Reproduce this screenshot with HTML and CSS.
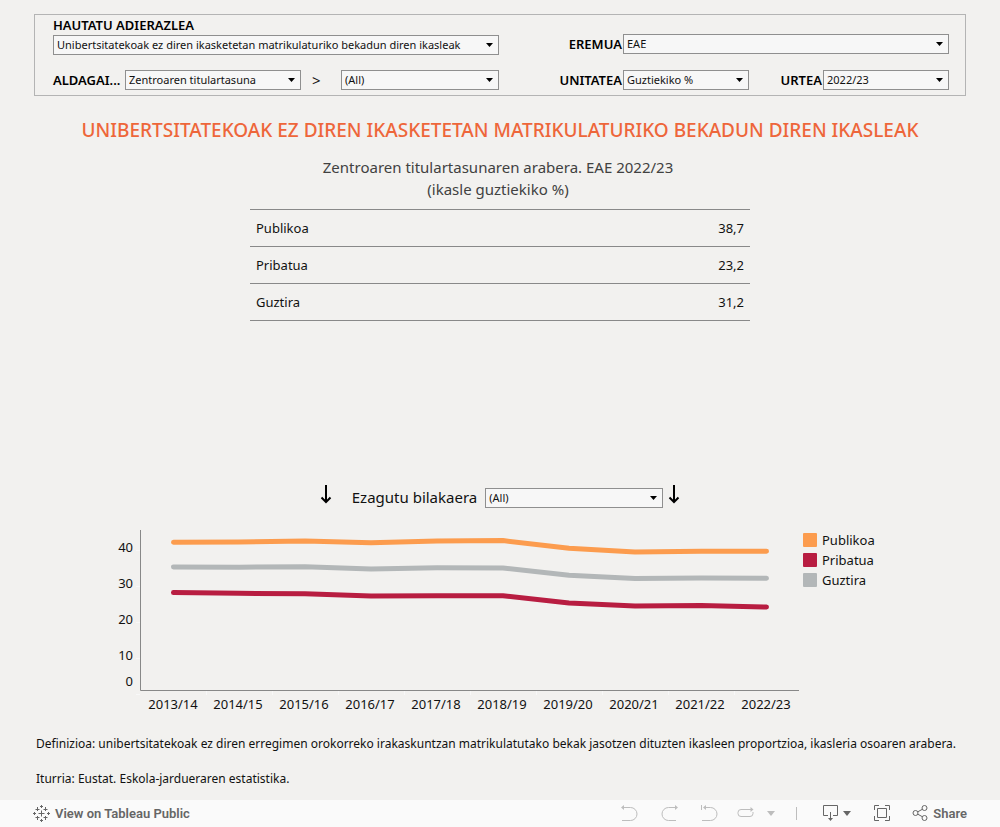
FILE: index.html
```html
<!DOCTYPE html>
<html lang="eu">
<head>
<meta charset="utf-8">
<meta name="viewport" content="width=device-width, initial-scale=1">
<title>Unibertsitatekoak ez diren ikasketetan matrikulaturiko bekadun diren ikasleak</title>
<link rel="stylesheet" href="styles.css">
</head>
<body>
<main class="dashboard">
  <form class="filters">
    <div class="filters-left">
      <label class="filter-label" for="indicator">HAUTATU ADIERAZLEA</label>
      <select class="dropdown" id="indicator"><option>Unibertsitatekoak ez diren ikasketetan matrikulaturiko bekadun diren ikasleak</option></select>
      <div class="variable-row">
        <label class="filter-label" for="variable">ALDAGAI...</label>
        <select class="dropdown" id="variable"><option>Zentroaren titulartasuna</option></select>
        <label class="chevron" for="category">&gt;</label>
        <select class="dropdown" id="category"><option>(All)</option></select>
      </div>
    </div>
    <div class="filters-right">
      <label class="filter-label" for="area">EREMUA</label>
      <select class="dropdown dropdown-wide" id="area"><option>EAE</option></select>
      <label class="filter-label" for="unit">UNITATEA</label>
      <select class="dropdown" id="unit"><option>Guztiekiko %</option></select>
      <label class="filter-label" for="year">URTEA</label>
      <select class="dropdown" id="year"><option>2022/23</option></select>
    </div>
  </form>

  <h1 class="title">UNIBERTSITATEKOAK EZ DIREN IKASKETETAN MATRIKULATURIKO BEKADUN DIREN IKASLEAK</h1>
  <p class="subtitle">Zentroaren titulartasunaren arabera. EAE 2022/23<br>(ikasle guztiekiko %)</p>

  <div class="table-area">
    <table class="results">
      <tbody>
        <tr><th scope="row">Publikoa</th><td>38,7</td></tr>
        <tr><th scope="row">Pribatua</th><td>23,2</td></tr>
        <tr><th scope="row">Guztira</th><td>31,2</td></tr>
      </tbody>
    </table>
  </div>

  <div class="evolution">
    <svg class="arrow" viewBox="0 0 12 20" aria-hidden="true"><path d="M6 1v17M1.500 13.500L6 18l4.500-4.500"/></svg>
    <label class="evolution-label" for="evolution">Ezagutu bilakaera</label>
    <select class="dropdown evolution-select" id="evolution"><option>(All)</option></select>
    <svg class="arrow" viewBox="0 0 12 20" aria-hidden="true"><path d="M6 1v17M1.500 13.500L6 18l4.500-4.500"/></svg>
  </div>

  <section class="chart-row">
    <svg class="chart" viewBox="0 0 700 186" role="img" aria-label="Bilakaera 2013/14 - 2022/23">
      <path class="tick" d="M36 20.500h4M36 56.500h4M36 92.500h4M36 128.500h4M36 164.500h4M106.500 161v4M172.500 161v4M238.500 161v4M304.500 161v4M370.500 161v4M436.500 161v4M502.500 161v4M568.500 161v4M634.500 161v4"/>
      <path class="axis" d="M40.500 0v160.500H699"/>
      <g class="y-labels">
        <text x="33" y="22">40</text><text x="33" y="58">30</text><text x="33" y="94">20</text><text x="33" y="130">10</text><text x="33" y="156">0</text>
      </g>
      <g class="x-labels">
        <text x="73" y="179">2013/14</text><text x="138" y="179">2014/15</text><text x="204" y="179">2015/16</text><text x="270" y="179">2016/17</text><text x="336" y="179">2017/18</text><text x="402" y="179">2018/19</text><text x="468" y="179">2019/20</text><text x="534" y="179">2020/21</text><text x="600" y="179">2021/22</text><text x="666" y="179">2022/23</text>
      </g>
      <polyline class="line line-public" points="73.500,12.300 139,11.900 205,10.900 271,12.700 337,11.100 403,10.600 469,18.200 535,22 601,21.300 666.500,21.200"/>
      <polyline class="line line-total" points="73.500,37.100 139,37.200 205,36.700 271,38.900 337,37.800 403,37.900 469,45.300 535,48.600 601,47.900 666.500,48.200"/>
      <polyline class="line line-private" points="73.500,62.600 139,63.300 205,63.800 271,66 337,65.700 403,65.700 469,73 535,75.900 601,75.400 666.500,77"/>
    </svg>
    <ul class="legend">
      <li><span class="swatch swatch-public"></span>Publikoa</li>
      <li><span class="swatch swatch-private"></span>Pribatua</li>
      <li><span class="swatch swatch-total"></span>Guztira</li>
    </ul>
  </section>

  <p class="note">Definizioa: unibertsitatekoak ez diren erregimen orokorreko irakaskuntzan matrikulatutako bekak jasotzen dituzten ikasleen proportzioa, ikasleria osoaren arabera.</p>
  <p class="note">Iturria: Eustat. Eskola-jardueraren estatistika.</p>
</main>

<footer class="toolbar">
  <a class="tool tableau" href="#">
    <svg width="17" height="17" viewBox="0 0 17 17" aria-hidden="true"><path d="M8.500 5.500v6M5.500 8.500h6M8.500 0v3M7 1.500h3M8.500 14v3M7 15.500h3M0 8.500h3M1.500 7v3M14 8.500h3M15.500 7v3M4.500 2v4M2.500 4.500h4M12.500 2v4M10.500 4.500h4M4.500 11v4M2.500 12.500h4M12.500 11v4M10.500 12.500h4"/></svg>
    View on Tableau Public
  </a>
  <div class="tools">
    <button class="tool muted" type="button" aria-label="Undo"><svg width="17" height="17" viewBox="0 0 17 17"><path d="M1 2.500h8.500a6.500 6.500 0 0 1 0 13H1"/><path class="solid" d="M0 2.500L3 0v5z"/></svg></button>
    <button class="tool muted" type="button" aria-label="Redo"><svg width="17" height="17" viewBox="0 0 17 17"><path d="M16 2.500H7.500a6.500 6.500 0 0 0 0 13H15"/><path class="solid" d="M17 2.500L14 0v5z"/></svg></button>
    <button class="tool muted revert" type="button" aria-label="Revert"><svg width="17" height="17" viewBox="0 0 17 17"><path d="M.5 0v5M3 2.500h6.500a6.500 6.500 0 0 1 0 13H1"/><path class="solid" d="M2 2.500L5 0v5z"/></svg></button>
    <button class="tool muted menu" type="button" aria-label="Refresh"><svg width="17" height="17" viewBox="0 0 17 17"><path d="M14 4.500H4a3 3 0 0 0-3 3v1a3 3 0 0 0 3 3h9a3 3 0 0 0 3-3V7"/><path class="solid" d="M16.500 4.500l-3-2.500v5z"/></svg><svg class="caret" width="8" height="5" viewBox="0 0 8 5"><path class="solid" d="M0 0h8L4 5z"/></svg></button>
    <span class="divider"></span>
    <button class="tool download" type="button" aria-label="Download"><svg width="17" height="17" viewBox="0 0 17 17"><path d="M5 10.500H.5v-10h14v10H10M7.500 7v7"/><path class="solid" d="M5 13h5l-2.500 3z"/></svg><svg class="caret" width="8" height="5" viewBox="0 0 8 5"><path class="solid" d="M0 0h8L4 5z"/></svg></button>
    <button class="tool fullscreen" type="button" aria-label="Full screen"><svg width="17" height="17" viewBox="0 0 17 17"><path d="M.5 5V.5H5M11 .5h4.500V5M15.500 11v4.500H11M5 15.500H.5V11M3.500 3.500h9v9h-9z"/></svg></button>
    <button class="tool share" type="button"><svg width="17" height="17" viewBox="0 0 17 17" aria-hidden="true"><circle cx="3.500" cy="8" r="2.500"/><circle cx="12.500" cy="3" r="2.500"/><circle cx="12.500" cy="13" r="2.500"/><path d="M5.800 6.800l4.500-2.500M5.800 9.200l4.500 2.500"/></svg>Share</button>
  </div>
</footer>
</body>
</html>
```
FILE: styles.css
```css
* { box-sizing: border-box; }

body {
  margin: 0;
  min-height: 100vh;
  display: flex;
  flex-direction: column;
  background: #f2f1ef;
  color: #111;
  font-family: "Noto Sans", "Open Sans", sans-serif;
  font-size: 13px;
}

.dashboard {
  flex: 1;
  padding: 14px 34px 0;
}

/* Filter panel */
.filters {
  display: flex;
  gap: 62px;
  height: 82px;
  padding: 0 16px 0 18px;
  border: 1px solid #b4b4b4;
}

.filters-left { flex: 446 1 0; min-width: 0; padding-top: 1px; }
.filters-left > .filter-label { display: block; margin-bottom: 1px; line-height: 18px; }
.variable-row {
  display: grid;
  grid-template-columns: 72px 176fr 40px 158fr;
  align-items: center;
  margin-top: 15px;
}

.filters-right {
  flex: 388 1 0;
  min-width: 0;
  display: grid;
  grid-template-columns: 62px 1fr 74px 1fr;
  grid-auto-rows: 20px;
  row-gap: 16px;
  align-items: center;
  padding-top: 19px;
}
.filters-right .filter-label { justify-self: end; padding-right: 1px; }

.filter-label {
  font-size: 13px;
  font-weight: 600;
  color: #000;
  line-height: 20px;
  white-space: nowrap;
}

.chevron { padding-left: 11px; font-size: 15px; line-height: 20px; }

.dropdown {
  display: block;
  width: 100%;
  min-width: 0;
  height: 20px;
  padding: 0 18px 0 3px;
  border: 1px solid #8f8f8f;
  border-radius: 0;
  appearance: none;
  background: #f7f7f7 url("data:image/svg+xml,%3Csvg xmlns='http://www.w3.org/2000/svg' width='7' height='4'%3E%3Cpath d='M0 0h7L3.500 4z'/%3E%3C/svg%3E") no-repeat right 5px center;
  color: #111;
  font-family: inherit;
  font-size: 11px;
  line-height: 18px;
}
.dropdown-wide { grid-column: 2 / -1; }

/* Headings */
.title {
  margin: 20px 0 0;
  color: #ee663a;
  font-size: 19px;
  font-weight: 500;
  line-height: 28px;
  text-align: center;
}

.subtitle {
  margin: 12px 4px 0 0;
  color: #414141;
  font-size: 15px;
  line-height: 22px;
  text-align: center;
}

/* Results table */
.table-area { min-height: 284px; padding-top: 9px; }
.results {
  width: 500px;
  max-width: 100%;
  margin: 0 auto;
  border-collapse: collapse;
}
.results tr { height: 37px; border: solid #898989; border-width: 1px 0; }
.results th { padding: 0 6px; font-weight: 400; text-align: left; }
.results td { padding: 0 6px; text-align: right; }

/* Evolution selector */
.evolution {
  display: flex;
  justify-content: center;
  height: 24px;
}
.arrow { width: 12px; height: 20px; fill: none; stroke: #000; stroke-width: 2; }
.evolution-label { margin: 2px 8px 0 20px; font-size: 15px; line-height: 22px; }
.evolution-select { width: 178px; margin: 4px 5px 0 0; }

/* Line chart */
.chart-row {
  display: flex;
  align-items: flex-start;
  gap: 3px;
  margin-top: 22px;
  padding: 0 56px 0 66px;
}
.chart { flex: 1; min-width: 0; overflow: visible; font-size: 13px; fill: #111; }
.axis { fill: none; stroke: #888; }
.tick { fill: none; stroke: #f8f8f8; }
.y-labels { text-anchor: end; }
.x-labels { text-anchor: middle; }
.line { fill: none; stroke-width: 5; stroke-linecap: round; stroke-linejoin: round; }
.line-public { stroke: #fc9c4e; }
.line-total { stroke: #b3b7b8; }
.line-private { stroke: #b81d41; }

.legend { width: 107px; margin: 0; padding: 0; list-style: none; }
.legend li { display: flex; align-items: center; gap: 5px; height: 20px; line-height: 20px; }
.swatch { width: 14px; height: 14px; border-radius: 1px; }
.swatch-public { background: #fc9c4e; }
.swatch-total { background: #b3b7b8; }
.swatch-private { background: #b81d41; }

/* Notes */
.note { margin: 0 0 17px 2px; font-size: 12px; line-height: 18px; }
.chart-row + .note { margin-top: 19px; }
.note:last-child { margin-bottom: 0; }

/* Toolbar */
.toolbar {
  display: flex;
  align-items: center;
  justify-content: space-between;
  height: 27px;
  padding: 0 33px;
  background: #fafafa;
  color: #666;
}
.tools { display: flex; align-items: center; }
.tool {
  display: flex;
  align-items: center;
  padding: 0;
  margin: 0;
  border: 0;
  background: none;
  color: #666;
  font-family: Roboto, "Liberation Sans", Arial, sans-serif;
  font-size: 13px;
  font-weight: 600;
  line-height: 17px;
  text-decoration: none;
}
.tool svg { fill: none; stroke: currentColor; }
.tool .solid { fill: currentColor; stroke: none; }
.tableau { gap: 5px; }
.tools .tool { margin-right: 23px; }
.tools .muted { color: #bdbdbd; }
.tools .revert { margin-right: 19px; }
.tools .menu { margin-right: 21px; }
.menu .caret { margin-left: 13px; }
.divider { width: 1px; height: 13px; margin-right: 26px; background: #bdbdbd; }
.download .caret { margin-left: 3px; }
.tools .fullscreen { margin-right: 21px; }
.tools .share { gap: 4px; margin-right: 0; }
```
